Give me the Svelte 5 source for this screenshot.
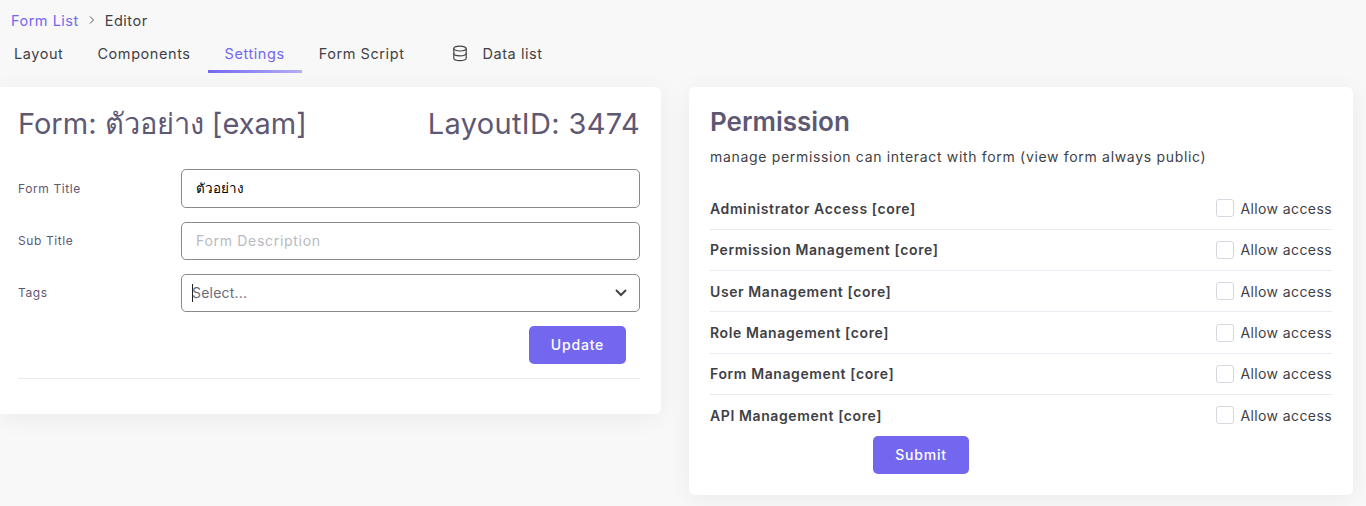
<script lang="ts">
  const tabs = ["Layout", "Components", "Settings", "Form Script"];
  const permissions = [
    "Administrator Access [core]",
    "Permission Management [core]",
    "User Management [core]",
    "Role Management [core]",
    "Form Management [core]",
    "API Management [core]",
  ];
</script>

<div class="page">
  <nav class="crumbs">
    <a href="#list" class="crumb-link">Form List</a>
    <svg class="crumb-sep" width="8" height="10" viewBox="0 0 8 10"><path d="M2 1.5 L5.5 5 L2 8.5" fill="none" stroke="#555" stroke-width="1" /></svg>
    <span>Editor</span>
  </nav>

  <div class="tabs">
    {#each tabs as tab}
      <span class="tab" class:active={tab === "Settings"}>{tab}</span>
    {/each}
    <span class="tab data-tab">
      <svg width="16" height="17" viewBox="0 0 16 17" fill="none" stroke="#444" stroke-width="1.2">
        <ellipse cx="8" cy="3.6" rx="6.2" ry="2.4" />
        <path d="M1.8 3.6 V13.2 C1.8 14.8 4.5 15.6 8 15.6 C11.5 15.6 14.2 14.8 14.2 13.2 V3.6" />
        <path d="M1.8 8.6 C1.8 10 4.5 10.9 8 10.9 C11.5 10.9 14.2 10 14.2 8.6" />
      </svg>
      Data list
    </span>
  </div>

  <div class="columns">
    <section class="card form-card">
      <div class="form-head">
        <h2>Form: ตัวอย่าง [exam]</h2>
        <h2 class="layout-id">LayoutID: 3474</h2>
      </div>

      <div class="field first">
        <label for="title">Form Title</label>
        <input id="title" class="filled" value="ตัวอย่าง" />
      </div>
      <div class="field second">
        <label for="sub">Sub Title</label>
        <input id="sub" placeholder="Form Description" />
      </div>
      <div class="field third">
        <span class="label">Tags</span>
        <div class="select">
          <span class="caret"></span>
          <span>Select...</span>
          <svg width="14" height="9" viewBox="0 0 14 9"><path d="M2 2 L7 7 L12 2" fill="none" stroke="#444" stroke-width="2" /></svg>
        </div>
      </div>

      <div class="form-actions">
        <button class="btn">Update</button>
      </div>
      <hr />
    </section>

    <section class="card perm-card">
      <h2 class="perm-title">Permission</h2>
      <p class="perm-desc">manage permission can interact with form (view form always public)</p>

      <div class="perm-list">
        {#each permissions as perm}
          <div class="perm-row">
            <span class="perm-name">{perm}</span>
            <span class="perm-check"><span class="box"></span>Allow access</span>
          </div>
        {/each}
      </div>

      <div class="perm-actions">
        <button class="btn submit">Submit</button>
      </div>
    </section>
  </div>
</div>

<style>
  :global(body) {
    background: #f8f8f8;
  }

  .page {
    height: 506px;
    overflow: hidden;
    font-family: Inter, "Noto Sans", sans-serif;
    color: #3f3f46;
  }

  .crumbs {
    display: flex;
    align-items: center;
    gap: 9px;
    height: 20px;
    padding: 10px 0 0 11px;
    font-size: 14.5px;
    letter-spacing: 0.5px;
  }

  .crumb-link {
    color: #7367f0;
    text-decoration: none;
  }

  .tabs {
    display: flex;
    margin-top: 4px;
    font-size: 14.5px;
    letter-spacing: 0.57px;
  }

  .tab {
    padding: 11px 17px 8px;
    line-height: 17px;
    border-bottom: 3px solid transparent;
    white-space: nowrap;
  }

  .tab:first-child {
    padding-left: 14px;
  }

  .active {
    color: #7367f0;
    border-image: linear-gradient(90deg, #7367f0, rgba(115, 103, 240, 0.5)) 1;
  }

  .data-tab {
    display: flex;
    align-items: center;
    gap: 14px;
    padding-left: 31px;
  }

  .columns {
    display: flex;
    align-items: flex-start;
    gap: 28px;
    margin-top: 14px;
    padding-right: 13px;
  }

  .card {
    background: #fff;
    border-radius: 6px;
    box-shadow: 0 4px 24px rgba(34, 41, 47, 0.06);
  }

  .form-card {
    width: 661px;
    height: 327px;
    box-sizing: border-box;
    padding: 18px 21px 0 18px;
    border-radius: 0 6px 6px 0;
  }

  .form-head {
    display: flex;
    justify-content: space-between;
    align-items: center;
  }

  h2 {
    margin: 0;
    font-size: 29px;
    font-weight: 400;
    line-height: 38px;
    color: #5e5873;
  }

  .layout-id {
    letter-spacing: 0.35px;
  }

  .field {
    display: grid;
    grid-template-columns: 163px 1fr;
    align-items: center;
  }

  .field.first {
    margin-top: 26px;
  }

  .field.second,
  .field.third {
    margin-top: 14px;
  }

  label,
  .label {
    font-size: 12px;
    letter-spacing: 0.6px;
    color: #5e5873;
  }

  .second label,
  .third .label {
    padding-bottom: 2px;
  }

  input {
    box-sizing: border-box;
    width: 100%;
    height: 39px;
    padding: 0 14px 1px;
    border: 1px solid #8a8a8e;
    border-radius: 5px;
    font: inherit;
    font-size: 14px;
    letter-spacing: 0.7px;
    color: #5e5873;
    background: #fff;
    outline: none;
  }

  input.filled {
    color: #000;
    font-size: 13.5px;
    font-weight: 500;
    letter-spacing: 0;
  }

  input::placeholder {
    color: #b9b9c3;
    opacity: 1;
  }

  .second input {
    height: 38px;
  }

  .select {
    box-sizing: border-box;
    display: flex;
    align-items: center;
    height: 38px;
    padding: 0 11px 1px 10px;
    border: 1px solid #8a8a8e;
    border-radius: 5px;
    font-size: 14px;
    letter-spacing: 0.2px;
    color: #6e6b7b;
    position: relative;
  }

  .select span:nth-child(2) {
    flex: 1;
  }

  .caret {
    position: absolute;
    left: 10px;
    top: 9px;
    width: 1px;
    height: 18px;
    background: #222;
  }

  .form-actions {
    display: flex;
    justify-content: flex-end;
    padding-right: 14px;
    margin-top: 14px;
  }

  .btn {
    width: 97px;
    height: 38px;
    padding: 0 0 2px;
    border: none;
    border-radius: 5px;
    background: #7367f0;
    color: #fff;
    font: inherit;
    font-size: 14px;
    font-weight: 500;
    letter-spacing: 0.8px;
  }

  .submit {
    width: 96px;
  }

  hr {
    border: none;
    border-top: 1px solid #ebe9f1;
    margin: 14px 0 0;
  }

  .perm-card {
    flex: 1;
    height: 408px;
    box-sizing: border-box;
    padding: 19px 21px 0;
  }

  .perm-title {
    font-size: 26px;
    font-weight: 600;
    line-height: 32px;
  }

  .perm-desc {
    margin: 10px 0 0;
    font-size: 14px;
    line-height: 18px;
    letter-spacing: 0.68px;
  }

  .perm-list {
    margin-top: 22.2px;
  }

  .perm-row {
    display: flex;
    justify-content: space-between;
    align-items: center;
    height: 40.4px;
    border-bottom: 1px solid #ebe9f1;
  }

  .perm-row:last-child {
    border-bottom: none;
  }

  .perm-name {
    font-size: 14px;
    font-weight: 600;
    letter-spacing: 0.6px;
  }

  .perm-check {
    display: flex;
    align-items: center;
    gap: 6px;
    font-size: 14px;
    letter-spacing: 0.4px;
  }

  .box {
    box-sizing: border-box;
    width: 18px;
    height: 18px;
    border: 1px solid #d8d6de;
    border-radius: 3px;
    background: #fff;
  }

  .perm-actions {
    display: flex;
    padding-left: 163px;
    margin-top: 0.8px;
  }
</style>
